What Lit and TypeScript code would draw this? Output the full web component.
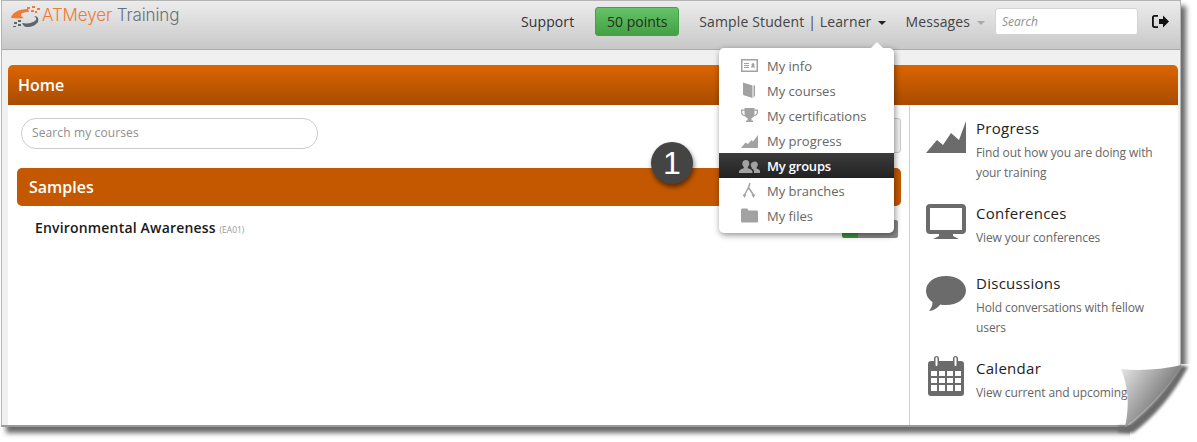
import { LitElement, html, css, svg } from 'lit';
import { customElement } from 'lit/decorators.js';
import { classMap } from 'lit/directives/class-map.js';

const menuIcons = {
  info: svg`<path fill-rule="evenodd" d="M0 1h17v13H0zM1.500 2.500v10h14v-10zM3 5h5v1H3zM3 7h5v1H3zM3 9h5v1H3zM10 9.500c0-1 .5-1.500 1-1.700a1.500 1.500 0 1 1 2 0c.5.2 1 .7 1 1.700z"/>`,
  courses: svg`<path d="M2 -.5 11.500 2.500V15L2.800 12.300C2.300 12 2 11.500 2 11zM12.500 2.700 14 2v11l-1.500 1.500z"/>`,
  cert: svg`<path fill-rule="evenodd" d="M3.500 0h10v1.500H17V4c0 2.500-1.500 4-4 4.300-.7 1-1.500 1.500-2.500 1.700v2.500H12V14H5v-1.500h1.500V10C5.500 9.800 4.700 9.300 4 8.300 1.500 8 0 6.500 0 4V1.500h3.500zM1.300 2.800V4c0 1.700.8 2.700 2.400 3-.2-1.200-.2-2.700-.2-4.200zm14.400 0h-2.200c0 1.500 0 3-.2 4.200 1.600-.3 2.400-1.300 2.400-3z"/>`,
  progress: svg`<path d="M0 15 4.500 9.500 7 11l3.500-4L12 8.500 17 2v13z"/>`,
  groups: svg`<path transform="translate(-2 0)" d="M7 2c2.200 0 3.300 1.600 3.300 3.600 0 1.500-.6 2.800-1.500 3.500v1.100c2.200.7 4.700 1.600 4.700 3.300V15H0v-1.500c0-1.700 2.600-2.600 4.800-3.300V9.100C3.900 8.400 3.300 7.100 3.300 5.600 3.300 3.600 4.800 2 7 2zM16 3.500c1.800 0 2.800 1.400 2.800 3 0 1.200-.5 2.300-1.200 2.900v1c1.800.6 3.400 1.300 3.400 2.800V15h-6v-1.800c0-1.200-1-2.200-2.400-3V9.400c-.6-.7-.9-1.800-.9-2.900 0-1.600 2.500-3 4.300-3z"/>`,
  branches: svg`<path fill="none" stroke="#a2a2a2" stroke-width="1.500" d="M9 0 7.500 4.500 3.500 12M7.500 4.500 12.500 12"/><path d="M1.500 11.500h4L3.500 15zM10.500 11.500h4L12.500 15z"/>`,
  files: svg`<path d="M0 2C0 1 .6.500 1.500.500h4C6.500.500 7 1 7.300 2.500h8.200c1 0 1.500.5 1.500 1.500v9c0 1-.5 1.500-1.500 1.500h-14C.6 14.500 0 14 0 13z"/>`,
};

const menu = [
  { label: 'My info', icon: menuIcons.info },
  { label: 'My courses', icon: menuIcons.courses },
  { label: 'My certifications', icon: menuIcons.cert },
  { label: 'My progress', icon: menuIcons.progress },
  { label: 'My groups', icon: menuIcons.groups, active: true },
  { label: 'My branches', icon: menuIcons.branches },
  { label: 'My files', icon: menuIcons.files },
];

const sideIcons = {
  progress: svg`<path d="M0 32 11 19 17 24 25 12 33 19 40 0v32z"/>`,
  conferences: svg`<path fill-rule="evenodd" d="M4 0h32c2.500 0 4 1.500 4 4v22c0 2.500-1.500 4-4 4H27v2l6 3H7l6-3v-2H4c-2.500 0-4-1.500-4-4V4C0 1.500 1.500 0 4 0zM4 4v22h32V4z"/>`,
  discussions: svg`<path d="M20 0c11 0 20 6 20 14.500S31 29 20 29c-2 0-4-.2-5.800-.6C12 31.500 8 34.500 3 35c2-2.500 3.500-5 3.500-9C2.500 23.500 0 19.500 0 14.500 0 6 9 0 20 0z"/>`,
  calendar: svg`<path fill-rule="evenodd" d="M8.500 0c1.500 0 2.500 1 2.500 2.500V5h14V2.500C25 1 26 0 27.500 0S30 1 30 2.500V5h3c2 0 3 1 3 3v29c0 2-1 3-3 3H3c-2 0-3-1-3-3V8c0-2 1-3 3-3h3V2.500C6 1 7 0 8.500 0zM7.500 2v7c0 1.300 2 1.300 2 0V2c0-1-2-1-2 0zm19 0v7c0 1.300 2 1.300 2 0V2c0-1-2-1-2 0zM3 15v5h6v-5zm8 0v5h6v-5zm8 0v5h6v-5zm8 0v5h6v-5zM3 22v5h6v-5zm8 0v5h6v-5zm8 0v5h6v-5zm8 0v5h6v-5zM3 29v6h6v-6zm8 0v6h6v-6zm8 0v6h6v-6zm8 0v6h6v-6z"/>`,
};

// the viewBox offset sets how far each glyph sits below the top of its row
const sideItems = [
  { title: 'Progress', text: 'Find out how you are doing with your training', icon: sideIcons.progress, vb: '0 -5 40 42' },
  { title: 'Conferences', text: 'View your conferences', icon: sideIcons.conferences, vb: '0 -3 40 42' },
  { title: 'Discussions', text: 'Hold conversations with fellow users', icon: sideIcons.discussions, vb: '0 -5 40 42' },
  { title: 'Calendar', text: 'View current and upcoming', icon: sideIcons.calendar, vb: '-2 0 40 42' },
];

@customElement('app-root')
export class AppRoot extends LitElement {
  static styles = css`
    :host {
      display: block;
      position: relative;
      width: 1197px;
      height: 442px;
      overflow: hidden;
      background: #fff;
      font-family: 'Open Sans', sans-serif;
    }
    .page {
      width: 1180px;
      height: 427px;
      margin-left: 1px;
      box-sizing: border-box;
      border: 1px solid #b4b4b4;
      border-bottom: 2px solid #9a9a9a;
      background: #f0f0f0;
      box-shadow: 5px 6px 5px #6a6a6a;
      display: flex;
      flex-direction: column;
    }
    .nav {
      height: 49px;
      flex: none;
      display: flex;
      align-items: flex-start;
      box-sizing: border-box;
      border-bottom: 1px solid #aaa;
      background: linear-gradient(#ececec, #c8c8c8);
      font-size: 14px;
      color: #444;
      white-space: nowrap;
    }
    .logo {
      display: flex;
      align-items: center;
      margin: 4px 0 0 8px;
      font-family: 'Inter', sans-serif;
      font-size: 17px;
      font-weight: 300;
      letter-spacing: -0.1px;
      color: #66717a;
    }
    .logo b {
      font-weight: 300;
      color: #ee7a36;
    }
    .logo span {
      margin-bottom: 4px;
    }
    .nav-items {
      margin-left: auto;
      display: flex;
      align-items: center;
      height: 41px;
      padding-right: 10px;
    }
    .support {
      color: #333;
      margin-right: 21px;
      letter-spacing: 0.1px;
    }
    .points {
      width: 84px;
      height: 29px;
      box-sizing: border-box;
      border: 1px solid #46a046;
      border-radius: 3px;
      background: linear-gradient(#66c266, #43a043);
      color: #1f2f1f;
      display: flex;
      align-items: center;
      justify-content: center;
      margin-right: 20px;
    }
    .caret {
      display: inline-block;
      width: 0;
      height: 0;
      border: 4px solid transparent;
      border-top-color: #222;
      border-bottom: 0;
      margin: 0 0 1px 7px;
      vertical-align: middle;
    }
    .caret.muted {
      border-top-color: #a8a8a8;
    }
    .user {
      margin-right: 19px;
      letter-spacing: 0.13px;
    }
    .messages {
      margin-right: 10px;
      letter-spacing: 0.1px;
    }
    .search {
      width: 143px;
      height: 27px;
      box-sizing: border-box;
      border: 1px solid #d4d4d4;
      border-radius: 3px;
      background: #fff;
      font-size: 12px;
      font-style: italic;
      color: #8f8f8f;
      padding: 0 6px;
      display: flex;
      align-items: center;
      margin-right: 14px;
    }
    .logout {
      width: 18px;
      height: 16px;
      display: block;
    }
    .panel {
      flex: 1;
      min-height: 0;
      margin: 15px 2px 0 6px;
      display: flex;
      flex-direction: column;
    }
    .panel-head {
      height: 40px;
      flex: none;
      box-sizing: border-box;
      padding: 0 10px;
      display: flex;
      align-items: center;
      border-radius: 5px 5px 0 0;
      background: linear-gradient(#dc6500, #a84c00);
      color: #fff;
      font-size: 16px;
      font-weight: 600;
    }
    .panel-body {
      flex: 1;
      min-height: 0;
      display: flex;
      background: #fff;
    }
    .main {
      width: 902px;
      flex: none;
      box-sizing: border-box;
      padding: 13px 8px 0 9px;
      border-right: 1px solid #d0d0d0;
    }
    .course-search {
      width: 297px;
      height: 31px;
      box-sizing: border-box;
      margin-left: 4px;
      border: 1px solid #ccc;
      border-radius: 15px;
      padding: 0 10px 2px;
      display: flex;
      align-items: center;
      font-size: 12px;
      letter-spacing: 0.12px;
      color: #8e8e8e;
    }
    .toolbar {
      display: flex;
      justify-content: space-between;
    }
    .ghost-btn {
      width: 30px;
      height: 35px;
      box-sizing: border-box;
      border: 1px solid #ccc;
      border-radius: 3px;
      background: #f2f2f2;
    }
    .section {
      height: 38px;
      margin-top: 15px;
      box-sizing: border-box;
      padding: 0 12px;
      display: flex;
      align-items: center;
      border-radius: 5px;
      background: #c45800;
      color: #fff;
      font-size: 16px;
      font-weight: 600;
    }
    .course {
      display: flex;
      align-items: baseline;
      justify-content: space-between;
      margin: 12px 3px 0 18px;
      font-size: 14px;
      font-weight: 600;
      color: #1a1a1a;
      letter-spacing: 0.18px;
    }
    .course small {
      font-size: 8.5px;
      font-weight: 400;
      color: #999;
      letter-spacing: 0;
    }
    .status {
      width: 56px;
      height: 18px;
      margin-top: 2px;
      border-radius: 2px;
      background: linear-gradient(90deg, #3f8f3f 0 16px, #8a8a8a 16px);
      align-self: center;
    }
    .side {
      flex: 1;
      min-width: 0;
      padding: 13px 10px 0 16px;
      overflow: hidden;
    }
    .side-item {
      display: flex;
      gap: 10px;
      min-height: 50px;
      margin-bottom: 20px;
    }
    .side-icon {
      width: 40px;
      height: 42px;
      flex: none;
      fill: #6b6b6b;
      margin-top: -2px;
    }
    .side-title {
      font-size: 15px;
      line-height: 20px;
      letter-spacing: 0.28px;
      color: #222;
      margin-bottom: 5px;
    }
    .side-text {
      font-size: 12px;
      line-height: 20px;
      letter-spacing: -0.1px;
      color: #666;
    }
    .dropdown {
      position: absolute;
      left: 719px;
      top: 48px;
      width: 175px;
      height: 185px;
      box-sizing: border-box;
      padding: 5px 0;
      background: #fff;
      border-radius: 5px;
      box-shadow: 1px 2px 6px rgba(0, 0, 0, 0.45);
    }
    .dropdown::before {
      content: '';
      position: absolute;
      top: -6px;
      left: 152px;
      width: 0;
      height: 0;
      border: 6px solid transparent;
      border-top: 0;
      border-bottom-color: #fff;
    }
    .menu-item {
      height: 25px;
      display: flex;
      align-items: center;
      padding-left: 22px;
      gap: 9px;
      font-size: 13px;
      color: #666;
    }
    .menu-item svg {
      width: 17px;
      height: 15px;
      flex: none;
      fill: #a2a2a2;
      overflow: visible;
    }
    .menu-item.active {
      background: linear-gradient(#3c3c3c, #222);
      color: #fff;
      font-weight: 600;
      letter-spacing: -0.2px;
    }
    .badge {
      position: absolute;
      left: 651px;
      top: 142px;
      width: 42px;
      height: 42px;
      border-radius: 50%;
      background: #444;
      color: #fff;
      font-family: 'Liberation Sans', sans-serif;
      font-size: 32px;
      line-height: 42px;
      text-align: center;
      box-shadow: 1px 3px 5px rgba(0, 0, 0, 0.55);
    }
    .curl {
      position: absolute;
      left: 1090px;
      top: 350px;
      width: 107px;
      height: 92px;
    }
  `;

  private renderLogo() {
    return html`<svg width="32" height="23" viewBox="0 0 32 23">
      <path fill="#ee7a36" d="M1 12C2 7 8 3 18 3l1 3c-5 0-8 1-8 3 0 1 1 2 3 3-5 1-9 0-13 0z" />
      <path fill="#5d666e" d="M12 17c6 1 11 0 14-3 .5-1 0-3-2-4 4 0 5 3 4 6-2 3-6 5-11 5-3 0-4-2-5-4z" />
      <g fill="#ee7a36">
        <rect x="17" y="1" width="3" height="2" /><rect x="22" y="0" width="3" height="2" />
        <rect x="27" y="2" width="3" height="2" /><rect x="21" y="4" width="3" height="2" />
        <rect x="25" y="5" width="2" height="2" />
      </g>
      <g fill="#5d666e">
        <rect x="8" y="14" width="3" height="2" /><rect x="4" y="16" width="3" height="2" />
        <rect x="8" y="18" width="3" height="2" /><rect x="3" y="20" width="3" height="1" />
      </g>
    </svg>`;
  }

  private renderCurl() {
    return html`<svg class="curl" viewBox="1090 350 107 92">
      <defs>
        <linearGradient id="fold" gradientUnits="userSpaceOnUse" x1="1122" y1="370" x2="1166" y2="400">
          <stop offset="0" stop-color="#e2e2e2" />
          <stop offset="1" stop-color="#787878" />
        </linearGradient>
        <filter id="soft" x="-20%" y="-20%" width="140%" height="140%">
          <feGaussianBlur stdDeviation="1.6" />
        </filter>
      </defs>
      <path fill="#fff" d="M1181 364H1197V442H1130V428Q1160 400 1181 364z" />
      <path fill="#6a6a6a" filter="url(#soft)" d="M1181 365Q1160 400 1127 426L1118 426V432L1133 433Q1166 408 1188 367z" />
      <path fill="url(#fold)" d="M1121 369Q1150 372 1182 365 1160 400 1125 427 1132 395 1121 369z" />
    </svg>`;
  }

  render() {
    return html`
      <div class="page">
        <div class="nav">
          <div class="logo">${this.renderLogo()}<span><b>ATMeyer</b> Training</span></div>
          <div class="nav-items">
            <span class="support">Support</span>
            <span class="points">50 points</span>
            <span class="user">Sample Student | Learner<i class="caret"></i></span>
            <span class="messages">Messages<i class="caret muted"></i></span>
            <div class="search">Search</div>
            <svg class="logout" viewBox="0 0 18 16">
              <path fill="#111" d="M6 1H2.500C1 1 0 2 0 3.500v8C0 13 1 14 2.500 14H6v-1.800H3c-.8 0-1.200-.4-1.200-1.200V4c0-.8.4-1.200 1.200-1.200h3zM7 5h4V1.500l6 6-6 6V10H7z" />
            </svg>
          </div>
        </div>
        <div class="panel">
          <div class="panel-head">Home</div>
          <div class="panel-body">
            <div class="main">
              <div class="toolbar">
                <div class="course-search">Search my courses</div>
                <div class="ghost-btn"></div>
              </div>
              <div class="section">Samples</div>
              <div class="course">
                <span>Environmental Awareness <small>(EA01)</small></span>
                <div class="status"></div>
              </div>
            </div>
            <div class="side">
              ${sideItems.map(
                item => html`
                  <div class="side-item">
                    <svg class="side-icon" viewBox=${item.vb}>${item.icon}</svg>
                    <div>
                      <div class="side-title">${item.title}</div>
                      <div class="side-text">${item.text}</div>
                    </div>
                  </div>
                `,
              )}
            </div>
          </div>
        </div>
      </div>
      <div class="badge">1</div>
      <div class="dropdown">
        ${menu.map(
          item => html`
            <div class="menu-item ${classMap({ active: !!item.active })}">
              <svg viewBox="0 0 17 15">${item.icon}</svg>
              <span>${item.label}</span>
            </div>
          `,
        )}
      </div>
      ${this.renderCurl()}
    `;
  }
}
